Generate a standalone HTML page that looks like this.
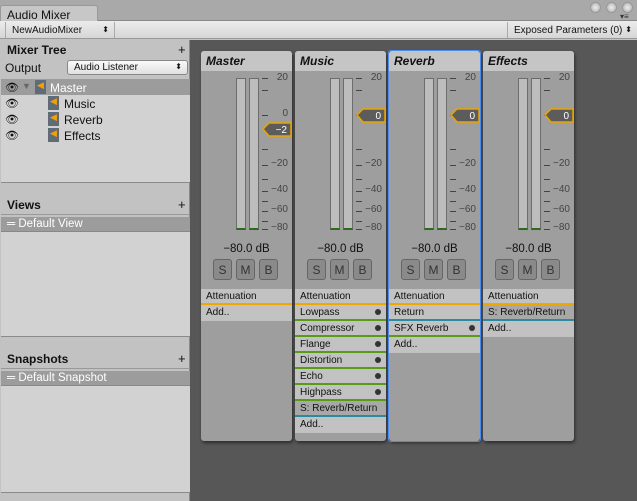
<!DOCTYPE html>
<html><head><meta charset="utf-8"><style>
*{box-sizing:border-box;margin:0;padding:0}
body{width:637px;height:501px;overflow:hidden;background:#c2c2c2;font-family:"Liberation Sans",sans-serif;font-size:11px;color:#111;position:relative}
.a{position:absolute}
.strip{position:absolute;top:51px;width:91px;height:390px;background:#9e9e9e;border-radius:3px;box-shadow:1px 2px 3px rgba(0,0,0,.5)}
.hdr{position:absolute;left:0;top:0;width:100%;height:20px;background:#c5c5c5;border-radius:3px 3px 0 0;font-weight:bold;font-style:italic;font-size:12px;padding:3px 0 0 5px}
.bar{position:absolute;top:27px;width:10px;height:152px;background:#bdbdbd;border:1px solid #6d6d6d;border-bottom:2px solid #2c6a1c}
.tick{position:absolute;left:61px;width:6px;height:1px;background:#444}
.lbl{position:absolute;right:4px;font-size:10px;color:#444;text-align:right;line-height:12px}
.db{position:absolute;top:192px;width:100%;text-align:center;font-size:11.5px}
.btn{position:absolute;top:208px;width:19px;height:21px;background:#8a8a8a;border:1px solid #666;border-radius:3px;text-align:center;font-size:12px;color:#333;padding-top:3px}
.row{position:absolute;left:0;width:91px;height:16px;background:#c2c2c2;font-size:10px;line-height:13px;padding:1px 0 0 5px;border-bottom:2px solid #c2c2c2}
.dot{position:absolute;right:5px;top:4px;width:6px;height:6px;border-radius:3px;background:#333}
.fad{position:absolute;left:61px;width:29px;height:14px}
.sel{position:absolute;left:1px;width:189px;height:15px;background:#9c9c9c;color:#fff;font-size:11.5px;line-height:14px;padding:0 0 0 6px;border-bottom:1px solid #888}
</style></head><body>
<div class="a" style="left:0;top:0;width:637px;height:21px;background:#a9a9a9;border-bottom:1px solid #888"></div>
<div class="a" style="left:0;top:5px;width:98px;height:17px;background:#c7c7c7;border:1px solid #999;border-bottom:none;border-radius:3px 3px 0 0;font-size:12px;padding:2px 0 0 6px">Audio Mixer</div>
<div class="a" style="left:590px;top:2px;width:11px;height:11px;border-radius:6px;background:radial-gradient(#eee,#aaa);border:1px solid #999"></div>
<div class="a" style="left:606px;top:2px;width:11px;height:11px;border-radius:6px;background:radial-gradient(#eee,#aaa);border:1px solid #999"></div>
<div class="a" style="left:622px;top:2px;width:11px;height:11px;border-radius:6px;background:radial-gradient(#eee,#aaa);border:1px solid #999"></div>
<div class="a" style="left:620px;top:12px;font-size:8px;color:#333">▾≡</div>
<div class="a" style="left:0;top:21px;width:637px;height:18px;background:linear-gradient(#ececec,#d6d6d6);border-bottom:1px solid #999"></div>
<div class="a" style="left:5px;top:22px;width:110px;height:16px;border-right:1px solid #aaa;border-left:1px solid #aaa;font-size:10px;padding:3px 0 0 6px">NewAudioMixer<span style="position:absolute;right:5px;font-size:8px">⬍</span></div>
<div class="a" style="left:507px;top:22px;width:130px;height:16px;border-left:1px solid #aaa;font-size:10px;padding:3px 0 0 6px">Exposed Parameters (0)<span style="position:absolute;right:5px;font-size:8px">⬍</span></div>
<div class="a" style="left:190px;top:40px;width:447px;height:461px;background:#575757"></div>
<div class="a" style="left:0;top:40px;width:190px;height:461px;background:#c2c2c2;border-right:1px solid #8a8a8a"></div>
<div class="a" style="left:7px;top:43px;font-weight:bold;font-size:12px">Mixer Tree</div><div class="a" style="left:178px;top:42px;font-size:13px">+</div>
<div class="a" style="left:5px;top:61px;font-size:12px">Output</div>
<div class="a" style="left:67px;top:60px;width:121px;height:15px;background:linear-gradient(#fafafa,#e0e0e0);border:1px solid #888;border-radius:3px;font-size:10px;padding:1px 0 0 6px">Audio Listener<span style="position:absolute;right:5px;font-size:8px">⬍</span></div>
<div class="a" style="left:1px;top:79px;width:189px;height:104px;background:#d2d2d2;border-bottom:1px solid #8a8a8a"></div>
<div class="a" style="left:1px;top:79px;width:189px;height:16px;background:#9c9c9c"></div>
<div class="a" style="left:5px;top:80px;font-size:11px;line-height:16px">👁<br>👁<br>👁<br>👁</div>
<div class="a" style="left:22px;top:81px;font-size:9px;color:#666">▼</div>
<div class="a" style="left:35px;top:80px;width:11px;height:14px;background:#5f6b78;color:#f5a000;font-size:9px;text-align:center">◀</div>
<div class="a" style="left:48px;top:96px;width:11px;height:14px;background:#5f6b78;color:#f5a000;font-size:9px;text-align:center">◀</div>
<div class="a" style="left:48px;top:112px;width:11px;height:14px;background:#5f6b78;color:#f5a000;font-size:9px;text-align:center">◀</div>
<div class="a" style="left:48px;top:128px;width:11px;height:14px;background:#5f6b78;color:#f5a000;font-size:9px;text-align:center">◀</div>
<div class="a" style="left:50px;top:81px;font-size:12px;color:#fff">Master</div>
<div class="a" style="left:64px;top:97px;font-size:12px">Music</div>
<div class="a" style="left:64px;top:113px;font-size:12px">Reverb</div>
<div class="a" style="left:64px;top:129px;font-size:12px">Effects</div>
<div class="a" style="left:7px;top:198px;font-weight:bold;font-size:12px">Views</div><div class="a" style="left:178px;top:197px;font-size:13px">+</div>
<div class="a" style="left:1px;top:214px;width:189px;height:1px;background:#999"></div>
<div class="sel" style="top:217px">═ Default View</div>
<div class="a" style="left:1px;top:232px;width:189px;height:105px;background:#d2d2d2;border-bottom:1px solid #8a8a8a"></div>
<div class="a" style="left:7px;top:352px;font-weight:bold;font-size:12px">Snapshots</div><div class="a" style="left:178px;top:351px;font-size:13px">+</div>
<div class="a" style="left:1px;top:368px;width:189px;height:1px;background:#999"></div>
<div class="sel" style="top:371px">═ Default Snapshot</div>
<div class="a" style="left:1px;top:386px;width:189px;height:107px;background:#d2d2d2;border-bottom:1px solid #8a8a8a"></div>
<div id="strips"></div>
<script>
var S=[
{x:201,n:"Master",f:-2,fy:71,rows:[["Attenuation","#f0a800"],["Add..",""]]},
{x:295,n:"Music",f:0,fy:57,rows:[["Attenuation","#f0a800"],["Lowpass","#5a9a14",1],["Compressor","#5a9a14",1],["Flange","#5a9a14",1],["Distortion","#5a9a14",1],["Echo","#5a9a14",1],["Highpass","#5a9a14",1],["S: Reverb/Return","#2a8aa0",0,1],["Add..",""]]},
{x:389,n:"Reverb",f:0,fy:57,b:1,rows:[["Attenuation","#f0a800"],["Return","#2a8aa0"],["SFX Reverb","#5a9a14",1],["Add..",""]]},
{x:483,n:"Effects",f:0,fy:57,rows:[["Attenuation","#f0a800"],["S: Reverb/Return","#2a8aa0",0,1],["Add..",""]]}];
var T=[27,39,64,98,114,128,140,150,160,170,178],L=[["20",21],["0",57],["−20",107],["−40",133],["−60",153],["−80",171]];
var h="";
S.forEach(function(s){
h+='<div class="strip" style="left:'+s.x+'px;"><div class="hdr">'+s.n+'</div>';
h+='<div class="bar" style="left:35px"></div><div class="bar" style="left:48px"></div>';
T.forEach(function(t){h+='<div class="tick" style="top:'+t+'px"></div>'});
L.forEach(function(l){h+='<div class="lbl" style="top:'+l[1]+'px">'+l[0]+'</div>'});
h+='<div class="fad" style="top:'+s.fy+'px"><svg width="30" height="15"><polygon points="1,7 7,1 29,1 29,14 7,14" fill="#5c5c5c" stroke="#e8a400" stroke-width="1.5"/><text x="25" y="11" fill="#fff" font-size="10" text-anchor="end" font-family="Liberation Sans">'+(s.f<0?'−2':'0')+'</text></svg></div>';
h+='<div class="db">−80.0 dB</div>';
[12,35,58].forEach(function(x,i){h+='<div class="btn" style="left:'+x+'px">'+"SMB"[i]+'</div>'});
s.rows.forEach(function(r,i){h+='<div class="row" style="top:'+(238+i*16)+'px;'+(r[1]?'border-bottom-color:'+r[1]+';':'')+(r[3]?'background:#a8a8a8;':'')+'">'+r[0]+(r[2]?'<div class="dot"></div>':'')+'</div>'});
if(s.b)h+='<div style="position:absolute;left:-1px;top:-1px;right:-1px;bottom:-1px;border:1px solid #4a8cf0;border-radius:3px"></div>';
h+='</div>';});
document.getElementById("strips").innerHTML=h;
</script>
</body></html>
